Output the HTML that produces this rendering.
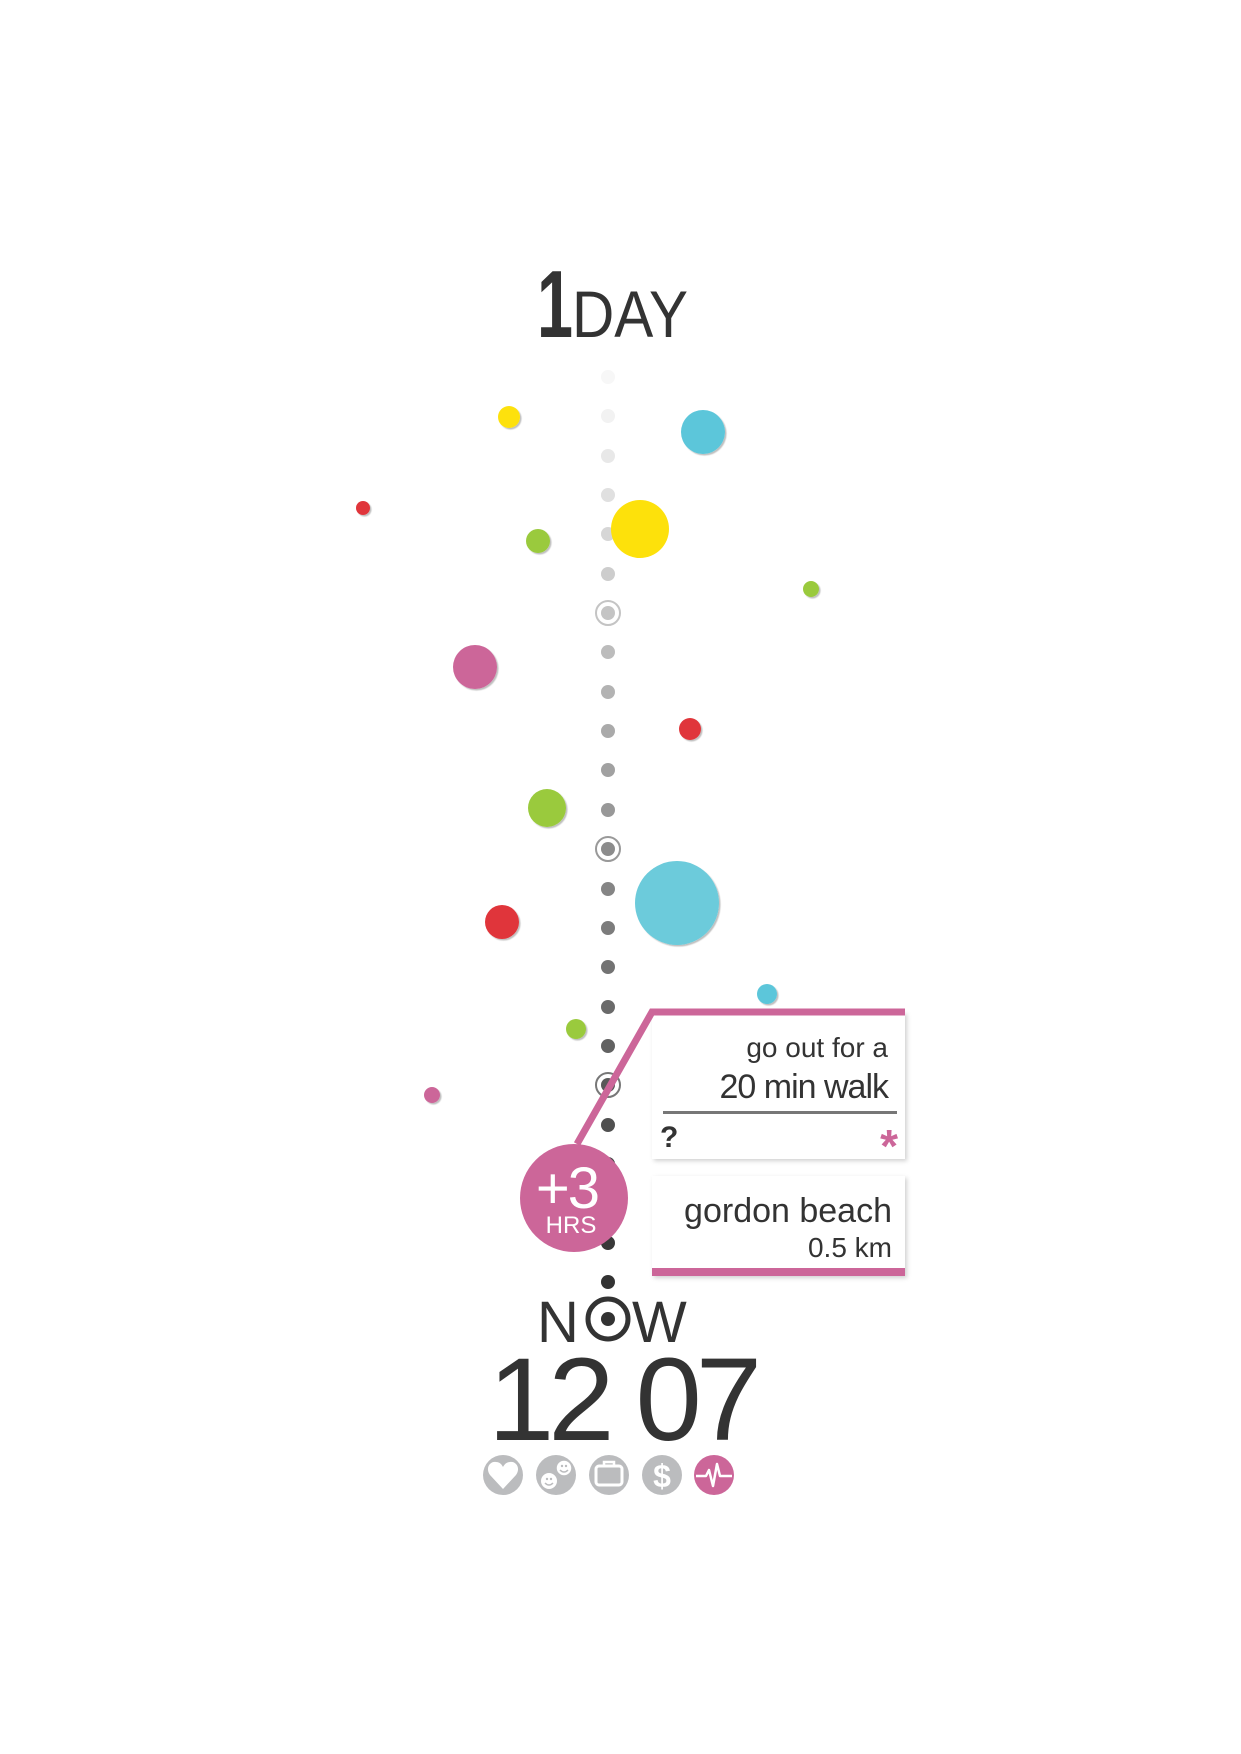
<!DOCTYPE html>
<html><head><meta charset="utf-8"><style>
html,body{margin:0;padding:0;background:#fff;}
svg{display:block;}
text{font-family:"Liberation Sans",sans-serif;}
</style></head><body>
<svg width="1241" height="1754" viewBox="0 0 1241 1754" xmlns="http://www.w3.org/2000/svg">
<defs>
<filter id="sh" x="-10%" y="-10%" width="130%" height="130%"><feDropShadow dx="2" dy="2" stdDeviation="2" flood-color="#000" flood-opacity="0.18"/></filter>
<filter id="bs" x="-20%" y="-20%" width="150%" height="150%"><feDropShadow dx="1.5" dy="1.5" stdDeviation="0.6" flood-color="#000" flood-opacity="0.25"/></filter>
</defs>
<!-- 1DAY -->
<text x="537" y="337" font-size="96" fill="#333" font-weight="bold" textLength="36" lengthAdjust="spacingAndGlyphs">1</text>
<text x="572" y="337" font-size="66" fill="#333" textLength="116" lengthAdjust="spacingAndGlyphs">DAY</text>
<!-- dots column -->
<g>
<circle cx="608" cy="377" r="7" fill="#f7f7f7"/>
<circle cx="608" cy="416" r="7" fill="#f2f2f2"/>
<circle cx="608" cy="456" r="7" fill="#e8e8e8"/>
<circle cx="608" cy="495" r="7" fill="#e0e0e0"/>
<circle cx="608" cy="534" r="7" fill="#d6d6d6"/>
<circle cx="608" cy="574" r="7" fill="#cdcdcd"/>
<circle cx="608" cy="613" r="12" fill="none" stroke="#c4c4c4" stroke-width="2"/>
<circle cx="608" cy="613" r="7" fill="#c4c4c4"/>
<circle cx="608" cy="652" r="7" fill="#bcbcbc"/>
<circle cx="608" cy="692" r="7" fill="#b3b3b3"/>
<circle cx="608" cy="731" r="7" fill="#aaaaaa"/>
<circle cx="608" cy="770" r="7" fill="#a1a1a1"/>
<circle cx="608" cy="810" r="7" fill="#989898"/>
<circle cx="608" cy="849" r="12" fill="none" stroke="#999" stroke-width="2"/>
<circle cx="608" cy="849" r="7" fill="#8c8c8c"/>
<circle cx="608" cy="889" r="7" fill="#858585"/>
<circle cx="608" cy="928" r="7" fill="#7c7c7c"/>
<circle cx="608" cy="967" r="7" fill="#737373"/>
<circle cx="608" cy="1007" r="7" fill="#6a6a6a"/>
<circle cx="608" cy="1046" r="7" fill="#626262"/>
<circle cx="608" cy="1085" r="12" fill="none" stroke="#777" stroke-width="2"/>
<circle cx="608" cy="1085" r="7" fill="#595959"/>
<circle cx="608" cy="1125" r="7" fill="#505050"/>
<circle cx="608" cy="1164" r="7" fill="#474747"/>
<circle cx="608" cy="1203" r="7" fill="#3f3f3f"/>
<circle cx="608" cy="1243" r="7" fill="#383838"/>
<circle cx="608" cy="1282" r="7" fill="#333"/>
</g>
<!-- bubbles -->
<g filter="url(#bs)">
<circle cx="509" cy="417" r="11" fill="#fde10b"/>
<circle cx="703" cy="432" r="22" fill="#5bc6da"/>
<circle cx="363" cy="508" r="7" fill="#e0363b"/>
<circle cx="538" cy="541" r="12" fill="#9aca3e"/>
<circle cx="811" cy="589" r="8" fill="#9aca3e"/>
<circle cx="475" cy="667" r="22" fill="#cc6699"/>
<circle cx="690" cy="729" r="11" fill="#e0363b"/>
<circle cx="547" cy="808" r="19" fill="#9aca3e"/>
<circle cx="677" cy="903" r="42" fill="#6ccbdb"/>
<circle cx="502" cy="922" r="17" fill="#e0363b"/>
<circle cx="767" cy="994" r="10" fill="#5bc6da"/>
<circle cx="576" cy="1029" r="10" fill="#9aca3e"/>
<circle cx="432" cy="1095" r="8" fill="#cc6699"/>
</g>
<circle cx="640" cy="529" r="29" fill="#fde10b"/>
<!-- callout -->
<rect x="652" y="1012" width="253" height="147" fill="#fff" filter="url(#sh)"/>
<rect x="652" y="1176" width="253" height="100" fill="#fff" filter="url(#sh)"/>
<polyline points="577,1144 652,1012 905,1012" fill="none" stroke="#cc6699" stroke-width="7"/>
<rect x="652" y="1268" width="253" height="8" fill="#cc6699"/>
<text x="888" y="1057" font-size="28" fill="#333" text-anchor="end">go out for a</text>
<text x="888" y="1098" font-size="34" fill="#333" text-anchor="end" letter-spacing="-1">20 min walk</text>
<rect x="663" y="1111" width="234" height="3" fill="#777"/>
<text x="660" y="1147" font-size="30" fill="#333" font-weight="bold">?</text>
<text x="898" y="1162" font-size="46" fill="#cc6699" font-weight="bold" text-anchor="end">*</text>
<text x="892" y="1222" font-size="34" fill="#333" text-anchor="end">gordon beach</text>
<text x="892" y="1257" font-size="28" fill="#333" text-anchor="end">0.5 km</text>
<!-- +3 circle -->
<circle cx="574" cy="1198" r="54" fill="#cc6699"/>
<text x="567" y="1208" font-size="58" fill="#fff" text-anchor="middle" letter-spacing="-2">+3</text>
<text x="571" y="1233" font-size="24" fill="#fff" text-anchor="middle">HRS</text>
<!-- NOW -->
<text x="537" y="1342" font-size="58" fill="#333">N</text>
<circle cx="608" cy="1319" r="20" fill="none" stroke="#333" stroke-width="5"/>
<circle cx="608" cy="1319" r="7" fill="#333"/>
<text x="632" y="1342" font-size="58" fill="#333">W</text>
<text x="488" y="1440" font-size="118" fill="#333" textLength="268" lengthAdjust="spacingAndGlyphs" letter-spacing="-6">12 07</text>
<!-- icons -->
<g transform="translate(0,16)">
<circle cx="503" cy="1459" r="20" fill="#bbbcbe"/>
<path d="M503 1473 L490 1459 C485 1452 490 1445 496 1446 C500 1446 502 1449 503 1451 C504 1449 506 1446 510 1446 C516 1445 521 1452 516 1459 Z" fill="#fff"/>
<circle cx="556" cy="1459" r="20" fill="#bbbcbe"/>
<circle cx="549" cy="1465" r="8" fill="#fff"/><circle cx="564" cy="1452" r="8" fill="#fff" stroke="#bbbcbe" stroke-width="1.5"/>
<circle cx="547" cy="1463" r="1.2" fill="#bbbcbe"/><circle cx="551" cy="1463" r="1.2" fill="#bbbcbe"/>
<path d="M545 1467 Q549 1471 553 1467" fill="none" stroke="#bbbcbe" stroke-width="1.5"/>
<circle cx="562" cy="1450" r="1.2" fill="#bbbcbe"/><circle cx="566" cy="1450" r="1.2" fill="#bbbcbe"/>
<path d="M560 1454 Q564 1458 568 1454" fill="none" stroke="#bbbcbe" stroke-width="1.5"/>
<circle cx="609" cy="1459" r="20" fill="#bbbcbe"/>
<rect x="596" y="1450" width="26" height="19" rx="3" fill="none" stroke="#fff" stroke-width="3"/>
<path d="M604 1450 V1446 H614 V1450" fill="none" stroke="#fff" stroke-width="2.5"/>
<circle cx="662" cy="1459" r="20" fill="#bbbcbe"/>
<text x="662" y="1471" font-size="32" fill="#fff" font-weight="bold" text-anchor="middle">$</text>
<circle cx="714" cy="1459" r="20" fill="#cc6699"/>
<path d="M696 1460 H706 L709 1454 L713 1470 L717 1448 L720 1460 H732" fill="none" stroke="#fff" stroke-width="2.5" stroke-linejoin="round"/>
</g>
</svg>
</body></html>
